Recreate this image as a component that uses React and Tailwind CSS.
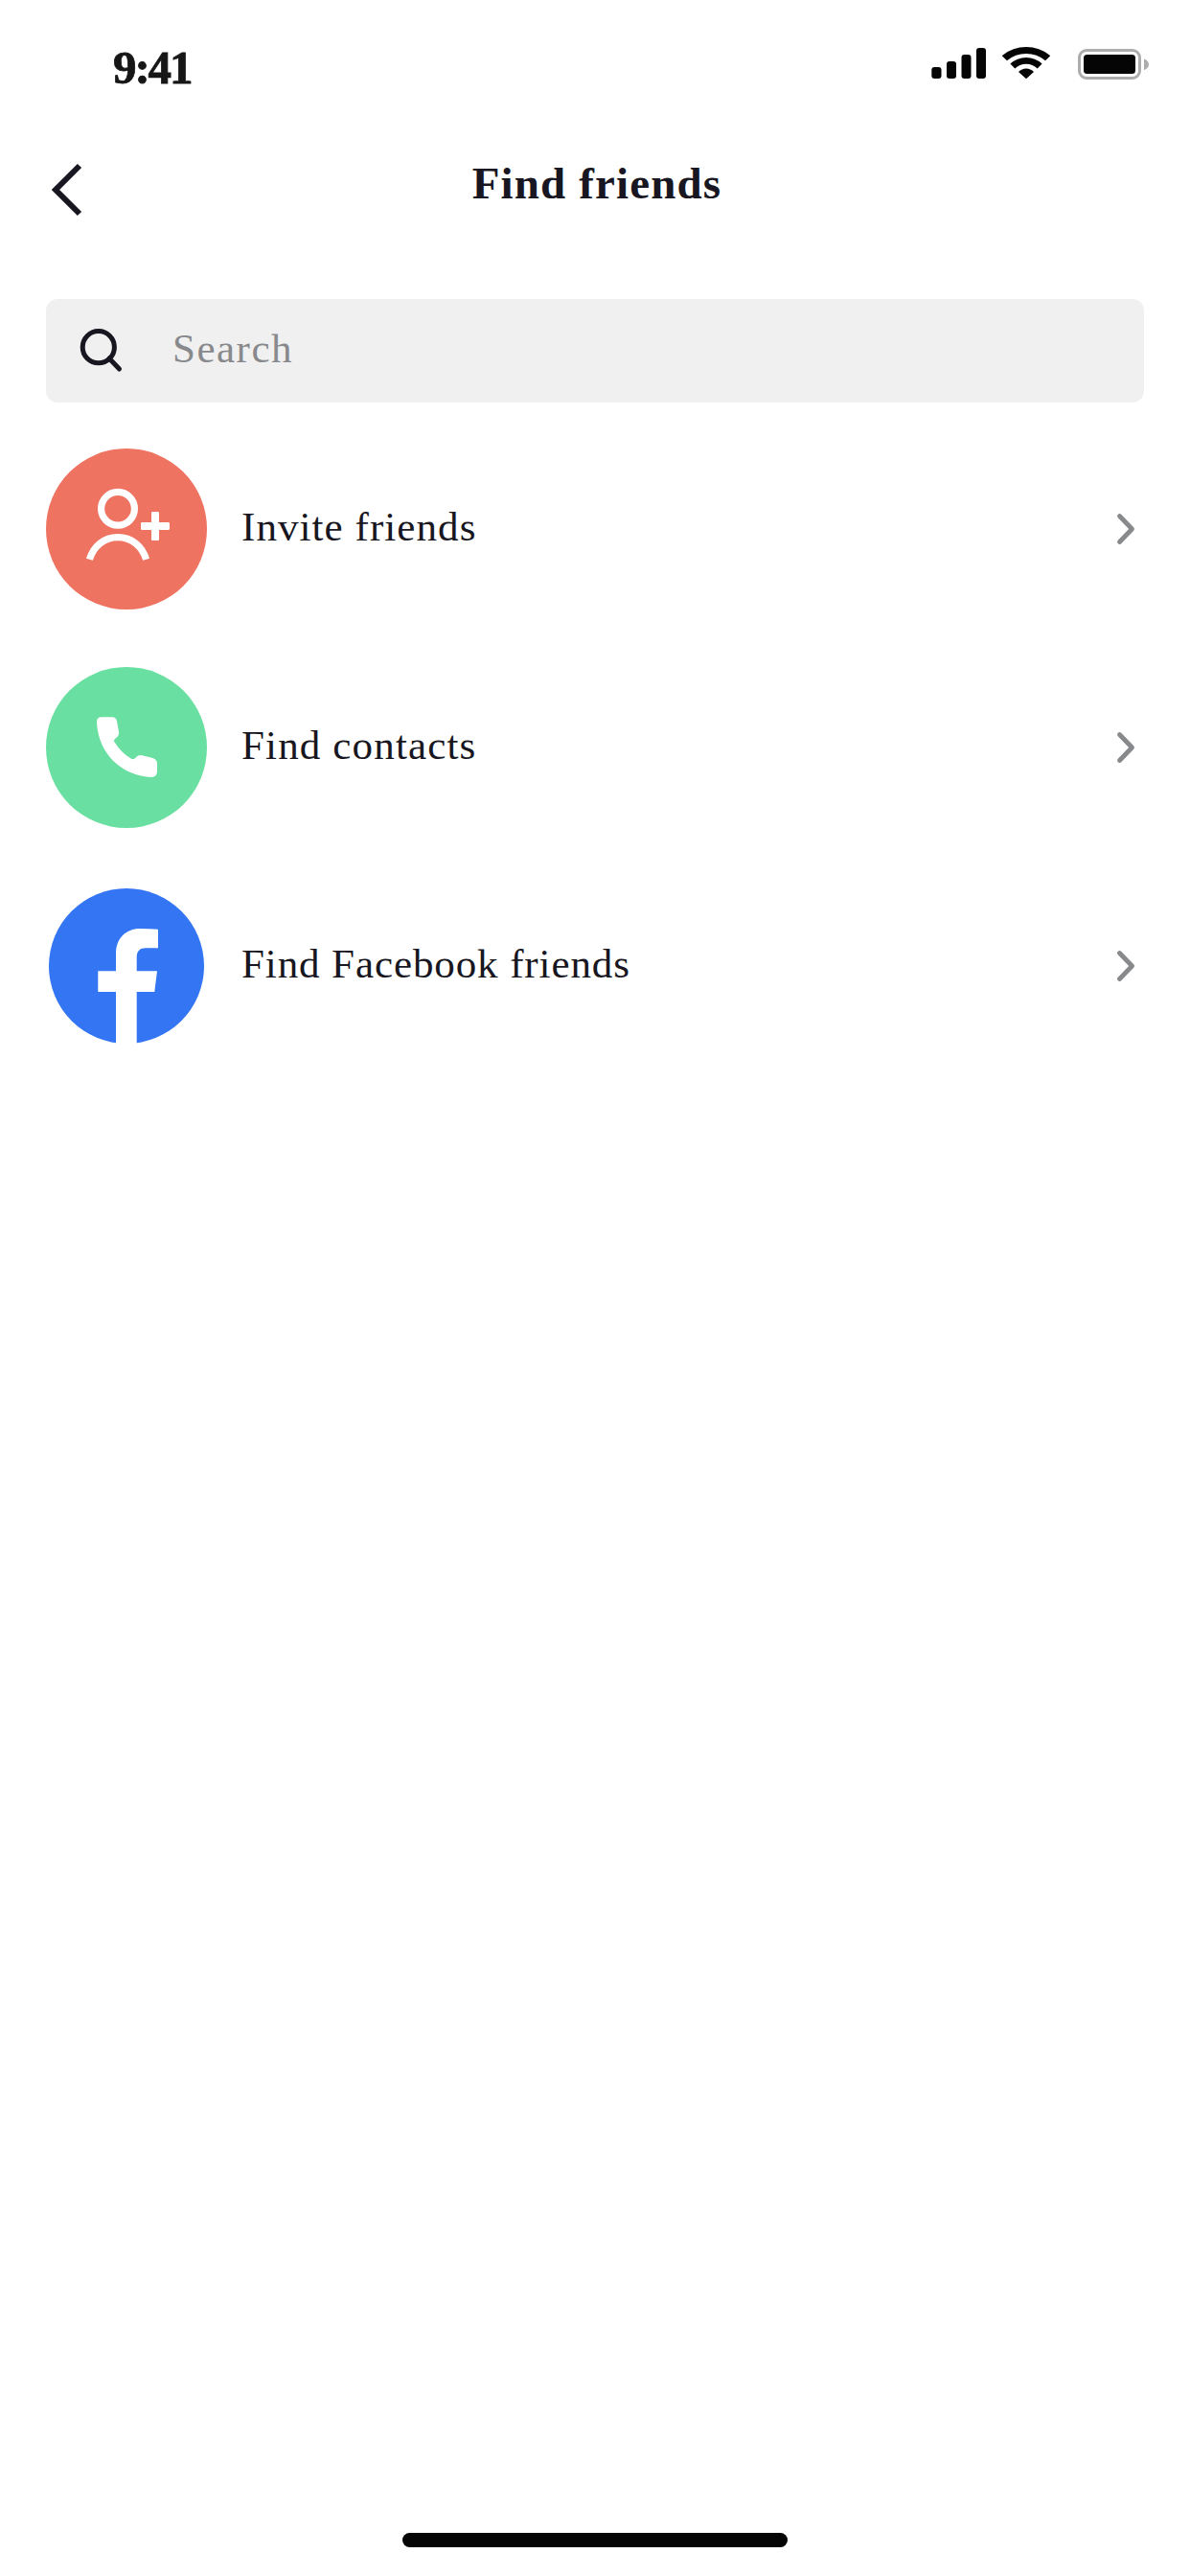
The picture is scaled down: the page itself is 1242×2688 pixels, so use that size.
const InviteIcon = () => (
  <svg className="size-[168px] shrink-0" viewBox="0 0 168 168" fill="none">
    <circle cx="84" cy="84" r="84" fill="#ee7361" />
    <circle cx="75" cy="62.8" r="17.4" stroke="#fff" strokeWidth="7.2" />
    <path d="M45.4 115.7C49.5 102 60.5 92.7 75 92.7S100.5 102 104.6 115.7" stroke="#fff" strokeWidth="7.2" />
    <rect x="110" y="66" width="8" height="30" rx="1.2" fill="#fff" />
    <rect x="99" y="77" width="30" height="8" rx="1.2" fill="#fff" />
  </svg>
);

const PhoneIcon = () => (
  <svg className="size-[168px] shrink-0" viewBox="0 0 168 168">
    <circle cx="84" cy="84" r="84" fill="#69dfa1" />
    <path
      fill="#fff"
      d="M58 52.3H69C72 52.3 73.7 54 74.1 57L76 67.5C76.2 69.7 76 71 74.8 72.4L71.5 75.5Q70.6 76.8 71.4 78.2C76 85.5 82 91.5 88.8 95.6Q90.8 96.9 92.6 95.4L95 93.2Q97.5 91.4 100.5 92.2L111.5 94.9Q116 96.5 116 100.8V109.3Q115.5 115.3 109.7 115C78 113 54.5 90 53 57.8Q52.8 52.3 58 52.3Z"
    />
  </svg>
);

const FacebookIcon = () => (
  <svg className="size-[168px] shrink-0" viewBox="0 0 168 168">
    <circle cx="84" cy="84" r="81" fill="#3375f3" />
    <path
      fill="#fff"
      d="M73 168V111H54.3V89.3H73V71C73 55.5 83 45 98 45Q108 45 117 45.7V65.3H104C98 65.3 94.7 68.5 94.7 75V89.3H116L113.3 111H94.7V168Z"
    />
  </svg>
);

const rows = [
  { label: "Invite friends", Icon: InviteIcon, tracking: "tracking-[1.07px]" },
  { label: "Find contacts", Icon: PhoneIcon, tracking: "tracking-[1.15px]" },
  { label: "Find Facebook friends", Icon: FacebookIcon, tracking: "tracking-[0.9px]" },
];

function StatusBar() {
  return (
    <div className="flex h-[132px] items-start justify-between pl-[118px] pr-[42px]">
      <span className="mt-[44px] text-[49px] leading-[54px] font-bold tracking-[-2.1px] text-[#161616] [-webkit-text-stroke:0.8px_#161616]">
        9:41
      </span>
      <div className="mt-[49px] flex items-start">
        <svg className="mr-[16px] h-[34px] w-[58px]" viewBox="0 0 58 34" fill="#050505">
          <rect x="0.3" y="21" width="10.2" height="12" rx="3" />
          <rect x="16" y="15" width="10" height="18" rx="3" />
          <rect x="31.5" y="8" width="10" height="25" rx="3" />
          <rect x="47" y="1" width="10" height="32" rx="3" />
        </svg>
        <svg className="mr-[29px] h-[34px] w-[50px]" viewBox="0 0 50 34" fill="#050505">
          <path d="M0.3 8.7Q11 0 25 0T49.7 8.7Q50.3 9.3 49.7 9.8L45 14.2Q36.3 7 25 7T5 14.2L0.3 9.8Q-0.3 9.3 0.3 8.7Z" />
          <path d="M8.4 17.6Q15.5 11 25 11T41.6 17.6L36.7 22.6Q31.8 17.7 25 17.7T13.3 22.6Z" />
          <path d="M17 26Q20.5 22.5 25 22.5T33 26L25 33.3Z" />
        </svg>
        <svg className="h-[36px] w-[75px]" viewBox="0 0 75 36">
          <rect x="1.5" y="3.5" width="63" height="29" rx="7.5" fill="none" stroke="#adadad" strokeWidth="3" />
          <rect x="6" y="8" width="54" height="20" rx="3.5" fill="#050505" />
          <path d="M69 12.5Q74 14.5 74 18.3T69 24.2Z" fill="#adadad" />
        </svg>
      </div>
    </div>
  );
}

export default function App() {
  return (
    <div className="flex h-[2688px] w-[1242px] flex-col bg-white font-['Liberation_Serif',serif] text-[#171621]">
      <StatusBar />
      <header className="grid h-[180px] grid-cols-[1fr_auto_1fr] items-start px-12">
        <button aria-label="Back" className="mt-[36px] h-[60px] w-[48px]">
          <svg className="h-[60px] w-[48px]" viewBox="0 0 48 60" fill="none">
            <path d="M35 5L10 30L35 55" stroke="#171621" strokeWidth="6" />
          </svg>
        </button>
        <h1 className="mt-[33px] pl-[4px] text-[47px] leading-[52px] font-bold tracking-[1.15px]">Find friends</h1>
      </header>
      <main className="px-12">
        <label className="flex h-[108px] items-center rounded-xl bg-[#f0f0f0] pl-[35px]">
          <svg className="size-[48px]" viewBox="0 0 48 48" fill="none" stroke="#171621" strokeWidth="5">
            <circle cx="19.8" cy="20.2" r="16.6" />
            <path d="M31 32L41.5 43" strokeLinecap="round" />
          </svg>
          <span className="ml-[49px] pb-1 text-[43px] leading-[46px] tracking-[1.5px] text-[#88898c]">Search</span>
        </label>
        <ul className="mt-12 flex flex-col gap-[60px]">
          {rows.map(({ label, Icon, tracking }) => (
            <li key={label} className="flex items-center">
              <Icon />
              <span className={`ml-9 pb-1 text-[43px] leading-[46px] ${tracking}`}>{label}</span>
              <svg className="mr-[6px] ml-auto h-[36px] w-[24px]" viewBox="0 0 24 36" fill="none">
                <path
                  d="M4.5 4.5L17.5 18L4.5 31.5"
                  stroke="#88898c"
                  strokeWidth="4.8"
                  strokeLinecap="round"
                  strokeLinejoin="round"
                />
              </svg>
            </li>
          ))}
        </ul>
      </main>
      <div className="mx-auto mt-auto mb-[30px] h-[15px] w-[402px] rounded-full bg-[#050505]" />
    </div>
  );
}
